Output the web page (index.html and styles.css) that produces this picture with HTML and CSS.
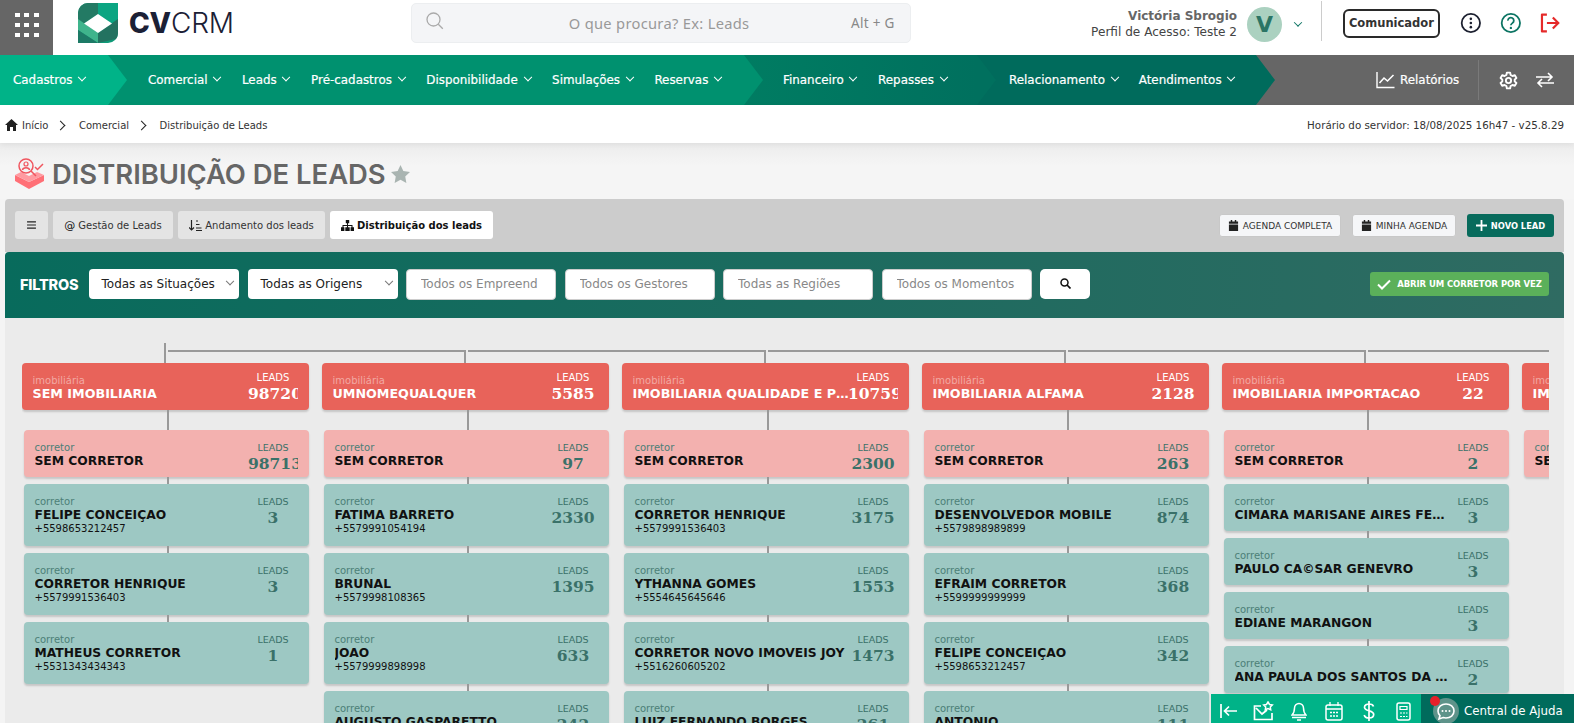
FILE: index.html
```html
<!DOCTYPE html>
<html lang="pt-BR">
<head>
<meta charset="utf-8">
<title>Distribuição de Leads</title>
<link rel="stylesheet" href="styles.css">
</head>
<body>
<svg class="defs" width="0" height="0">
  <symbol id="cal" viewBox="0 0 12 12"><path fill="#222" d="M3 0h1.600v1.600h2.800V0H9v1.600h2V4H1V1.600h2zM1 5h10v7H1z"/></symbol>
</svg>
<header class="top">
  <div class="apps"><span></span><span></span><span></span><span></span><span></span><span></span><span></span><span></span><span></span></div>
  <div class="logo">
    <svg width="40" height="40" viewBox="0 0 40 40">
      <path fill="#0f9a78" d="M10 0h30v30a10 10 0 0 1-10 10H0V10A10 10 0 0 1 10 0z"/>
      <path fill="#237a64" d="M0 10A10 10 0 0 1 10 0h10v11L6 20.500l-6 4z"/>
      <path fill="#0ba582" d="M20 0h20v16l-6 4.500-14-9.500z"/>
      <path fill="#237260" d="M40 16v14a10 10 0 0 1-2 6l-18 4v-10z"/>
      <path fill="#3fb48c" d="M0 16l20 14v10L0 27z"/>
      <path fill="#1d7a66" d="M0 27l20 13H0z"/>
      <path fill="#fff" d="M20 11l14 9.500L20 30 6 20.500z"/>
    </svg>
    <span class="brand"><b>CV</b>CRM</span>
  </div>
  <div class="search">
    <svg class="search-ico" width="18" height="18" viewBox="0 0 18 18"><circle cx="7.500" cy="7.500" r="6.500" fill="none" stroke="#aaa" stroke-width="1.300"/><path d="M12.300 12.300l4.500 4.500" stroke="#aaa" stroke-width="1.300"/></svg>
    <span class="search-text">O que procura? Ex: Leads</span>
    <span class="search-key">Alt + G</span>
  </div>
  <div class="user">
    <div class="user-text"><strong>Victória Sbrogio</strong><span>Perfil de Acesso: Teste 2</span></div>
    <div class="avatar">V</div>
    <i class="chev chev-teal"></i>
  </div>
  <div class="top-actions">
    <button class="com">Comunicador</button>
    <svg width="22" height="22" viewBox="0 0 22 22"><circle cx="11" cy="11" r="9.300" fill="none" stroke="#1c2030" stroke-width="1.800"/><circle cx="11" cy="6.800" r="1.300" fill="#1c2030"/><circle cx="11" cy="11" r="1.300" fill="#1c2030"/><circle cx="11" cy="15.200" r="1.300" fill="#1c2030"/></svg>
    <svg width="22" height="22" viewBox="0 0 22 22"><circle cx="11" cy="11" r="9.300" fill="none" stroke="#0c7463" stroke-width="1.800"/><path d="M8 8.600a3 3 0 1 1 4.600 2.500c-1 .7-1.600 1.100-1.600 2.200" fill="none" stroke="#0c7463" stroke-width="1.800"/><circle cx="11" cy="16" r="1.200" fill="#0c7463"/></svg>
    <svg width="22" height="22" viewBox="0 0 22 22"><path d="M8 2.500H3v17h5" fill="none" stroke="#e52a2a" stroke-width="2.200" stroke-linejoin="round"/><path d="M8 11h11M14 5.500l5.500 5.500-5.500 5.500" fill="none" stroke="#e52a2a" stroke-width="2.200"/></svg>
  </div>
</header>

<nav class="nav">
  <div class="seg seg1"><a>Cadastros <i class="chev"></i></a></div>
  <div class="seg seg2"><a>Comercial <i class="chev"></i></a><a>Leads <i class="chev"></i></a><a>Pré-cadastros <i class="chev"></i></a><a>Disponibilidade <i class="chev"></i></a><a>Simulações <i class="chev"></i></a><a>Reservas <i class="chev"></i></a></div>
  <div class="seg seg3"><a>Financeiro <i class="chev"></i></a><a>Repasses <i class="chev"></i></a></div>
  <div class="seg seg4"><a>Relacionamento <i class="chev"></i></a><a>Atendimentos <i class="chev"></i></a></div>
  <div class="nav-right">
    <a class="rel">
      <svg width="19" height="18" viewBox="0 0 19 18"><path d="M1 1v15.500h17.500" fill="none" stroke="#fff" stroke-width="1.400"/><path d="M3.500 12l4.500-5 3.500 3 6-6" fill="none" stroke="#fff" stroke-width="1.600"/></svg>
      Relatórios
    </a>
    <svg class="gear" width="19" height="19" viewBox="0 0 24 24"><path fill="none" stroke="#fff" stroke-width="2.400" stroke-linejoin="round" d="M10 2h4l.7 3 2.300 1.300 3-.9 2 3.400-2.200 2.100v2.200l2.200 2.100-2 3.400-3-.9L14.700 19l-.7 3h-4l-.7-3L7 17.700l-3 .9-2-3.400 2.200-2.100v-2.200L2 8.800l2-3.400 3 .9L9.300 5z"/><circle cx="12" cy="12" r="3.300" fill="none" stroke="#fff" stroke-width="2.400"/></svg>
    <svg class="swap" width="18" height="16" viewBox="0 0 18 16"><path d="M0 5h16M12 1l4 4-4 4M18 11H2M6 7l-4 4 4 4" fill="none" stroke="#fff" stroke-width="1.600"/></svg>
  </div>
</nav>

<div class="crumbs">
  <div class="crumb-list">
    <svg width="13" height="12" viewBox="0 0 13 12"><path fill="#222" d="M6.500 0L13 6h-2v6H8V8H5v4H2V6H0z"/></svg>
    <span class="crumb-first">Início</span><i class="sep"></i><span>Comercial</span><i class="sep"></i><span>Distribuição de Leads</span>
  </div>
  <div class="server">Horário do servidor: 18/08/2025 16h47 - v25.8.29</div>
</div>

<div class="title-row">
  <svg width="31" height="31" viewBox="0 0 31 31">
    <path fill="#ff6f76" d="M1 17l14 7 15-7v6l-15 8-14-8z"/>
    <path fill="#ff9aa0" d="M1 17l6-3 8 4 8-4 7 3-15 7z"/>
    <circle cx="12" cy="8" r="7" fill="#f4f4f4" stroke="#f0565f" stroke-width="1.500"/>
    <circle cx="12" cy="6" r="2" fill="none" stroke="#f0565f" stroke-width="1.200"/>
    <path d="M8.500 12c.5-3 6.500-3 7 0M17 13l5 5M21 9l2.500 2.500L29 6" fill="none" stroke="#f0565f" stroke-width="1.500"/>
  </svg>
  <h1>DISTRIBUIÇÃO DE LEADS</h1>
  <svg class="star" width="19" height="18" viewBox="0 0 20 19"><path fill="#a9b4b1" d="M10 0l3 6.300 7 1-5 4.800 1.200 6.900L10 15.700 3.800 19 5 12.100 0 7.300l7-1z"/></svg>
</div>

<main class="panel">
  <div class="toolbar">
    <div class="tabs">
      <button class="tab tab-icon"><svg width="9" height="8" viewBox="0 0 10 9"><path d="M0 1h10M0 4.500h10M0 8h10" stroke="#222" stroke-width="1.300"/></svg></button>
      <button class="tab tab-a"><b class="at">@</b> Gestão de Leads</button>
      <button class="tab tab-b"><svg width="13" height="11" viewBox="0 0 13 11"><path d="M2.500 0v10M0 7.500L2.500 10 5 7.500M7 1h2M7 4.500h3.500M7 8h5.500M7 10.500h6" stroke="#222" stroke-width="1.200" fill="none"/></svg> Andamento dos leads</button>
      <button class="tab tab-c"><svg width="13" height="11" viewBox="0 0 13 11"><path fill="#111" d="M4.800 0h3.400v3.200H7V5h4.500v2.200H13V11H9.600V7.200h.9V6H7v1.200h1.700V11H4.300V7.200H6V6H2.500v1.200h.9V11H0V7.200h1.500V5H6V3.200H4.800z"/></svg> Distribuição dos leads</button>
    </div>
    <div class="tools">
      <button class="tool tool-a"><svg width="11" height="11"><use href="#cal"/></svg>AGENDA COMPLETA</button>
      <button class="tool tool-b"><svg width="11" height="11"><use href="#cal"/></svg>MINHA AGENDA</button>
      <button class="tool-new"><svg width="11" height="11" viewBox="0 0 11 11"><path d="M5.500 0v11M0 5.500h11" stroke="#fff" stroke-width="1.800"/></svg>NOVO LEAD</button>
    </div>
  </div>

  <section class="filters">
    <strong class="f-label">FILTROS</strong>
    <div class="select">Todas as Situações<i class="chev chev-gray"></i></div>
    <div class="select select-last">Todas as Origens<i class="chev chev-gray"></i></div>
    <input class="f-input" placeholder="Todos os Empreend">
    <input class="f-input" placeholder="Todos os Gestores">
    <input class="f-input" placeholder="Todas as Regiões">
    <input class="f-input" placeholder="Todos os Momentos">
    <button class="f-search"><svg width="11" height="11" viewBox="0 0 11 11"><circle cx="4.500" cy="4.500" r="3.500" fill="none" stroke="#111" stroke-width="1.500"/><path d="M7 7l3.500 3.500" stroke="#111" stroke-width="1.700"/></svg></button>
    <button class="f-open"><svg width="14" height="11" viewBox="0 0 14 11"><path d="M1 5.500l4 4 8-8" fill="none" stroke="#fff" stroke-width="2"/></svg>ABRIR UM CORRETOR POR VEZ</button>
  </section>

  <div class="tree-wrap">
    <div class="tree">

      <div class="col col-first">
        <div class="imob"><div class="info"><small>imobiliária</small><b>SEM IMOBILIARIA</b></div><div class="count"><small>LEADS</small><b>98720</b></div></div>
        <div class="stack">
          <div class="card pink"><div class="info"><small>corretor</small><b>SEM CORRETOR</b></div><div class="count"><small>LEADS</small><b>98713</b></div></div>
          <div class="card teal"><div class="info"><small>corretor</small><b>FELIPE CONCEIÇAO</b><span>+5598653212457</span></div><div class="count"><small>LEADS</small><b>3</b></div></div>
          <div class="card teal"><div class="info"><small>corretor</small><b>CORRETOR HENRIQUE</b><span>+5579991536403</span></div><div class="count"><small>LEADS</small><b>3</b></div></div>
          <div class="card teal"><div class="info"><small>corretor</small><b>MATHEUS CORRETOR</b><span>+5531343434343</span></div><div class="count"><small>LEADS</small><b>1</b></div></div>
        </div>
      </div>

      <div class="col">
        <div class="imob"><div class="info"><small>imobiliária</small><b>UMNOMEQUALQUER</b></div><div class="count"><small>LEADS</small><b>5585</b></div></div>
        <div class="stack">
          <div class="card pink"><div class="info"><small>corretor</small><b>SEM CORRETOR</b></div><div class="count"><small>LEADS</small><b>97</b></div></div>
          <div class="card teal"><div class="info"><small>corretor</small><b>FATIMA BARRETO</b><span>+5579991054194</span></div><div class="count"><small>LEADS</small><b>2330</b></div></div>
          <div class="card teal"><div class="info"><small>corretor</small><b>BRUNAL</b><span>+5579998108365</span></div><div class="count"><small>LEADS</small><b>1395</b></div></div>
          <div class="card teal"><div class="info"><small>corretor</small><b>JOAO</b><span>+5579999898998</span></div><div class="count"><small>LEADS</small><b>633</b></div></div>
          <div class="card teal"><div class="info"><small>corretor</small><b>AUGUSTO GASPARETTO</b><span>+5579999999999</span></div><div class="count"><small>LEADS</small><b>242</b></div></div>
        </div>
      </div>

      <div class="col">
        <div class="imob"><div class="info"><small>imobiliária</small><b>IMOBILIARIA QUALIDADE E PRODUTIVIDADE</b></div><div class="count"><small>LEADS</small><b>10759</b></div></div>
        <div class="stack">
          <div class="card pink"><div class="info"><small>corretor</small><b>SEM CORRETOR</b></div><div class="count"><small>LEADS</small><b>2300</b></div></div>
          <div class="card teal"><div class="info"><small>corretor</small><b>CORRETOR HENRIQUE</b><span>+5579991536403</span></div><div class="count"><small>LEADS</small><b>3175</b></div></div>
          <div class="card teal"><div class="info"><small>corretor</small><b>YTHANNA GOMES</b><span>+5554645645646</span></div><div class="count"><small>LEADS</small><b>1553</b></div></div>
          <div class="card teal"><div class="info"><small>corretor</small><b>CORRETOR NOVO IMOVEIS JOY</b><span>+5516260605202</span></div><div class="count"><small>LEADS</small><b>1473</b></div></div>
          <div class="card teal"><div class="info"><small>corretor</small><b>LUIZ FERNANDO BORGES</b><span>+5579999999999</span></div><div class="count"><small>LEADS</small><b>261</b></div></div>
        </div>
      </div>

      <div class="col">
        <div class="imob"><div class="info"><small>imobiliária</small><b>IMOBILIARIA ALFAMA</b></div><div class="count"><small>LEADS</small><b>2128</b></div></div>
        <div class="stack">
          <div class="card pink"><div class="info"><small>corretor</small><b>SEM CORRETOR</b></div><div class="count"><small>LEADS</small><b>263</b></div></div>
          <div class="card teal"><div class="info"><small>corretor</small><b>DESENVOLVEDOR MOBILE</b><span>+5579898989899</span></div><div class="count"><small>LEADS</small><b>874</b></div></div>
          <div class="card teal"><div class="info"><small>corretor</small><b>EFRAIM CORRETOR</b><span>+5599999999999</span></div><div class="count"><small>LEADS</small><b>368</b></div></div>
          <div class="card teal"><div class="info"><small>corretor</small><b>FELIPE CONCEIÇAO</b><span>+5598653212457</span></div><div class="count"><small>LEADS</small><b>342</b></div></div>
          <div class="card teal"><div class="info"><small>corretor</small><b>ANTONIO</b><span>+5579999999999</span></div><div class="count"><small>LEADS</small><b>111</b></div></div>
        </div>
      </div>

      <div class="col">
        <div class="imob"><div class="info"><small>imobiliária</small><b>IMOBILIARIA IMPORTACAO</b></div><div class="count"><small>LEADS</small><b>22</b></div></div>
        <div class="stack">
          <div class="card pink"><div class="info"><small>corretor</small><b>SEM CORRETOR</b></div><div class="count"><small>LEADS</small><b>2</b></div></div>
          <div class="card teal short"><div class="info"><small>corretor</small><b>CIMARA MARISANE AIRES FERREIRA</b></div><div class="count"><small>LEADS</small><b>3</b></div></div>
          <div class="card teal short"><div class="info"><small>corretor</small><b>PAULO CA©SAR GENEVRO</b></div><div class="count"><small>LEADS</small><b>3</b></div></div>
          <div class="card teal short"><div class="info"><small>corretor</small><b>EDIANE MARANGON</b></div><div class="count"><small>LEADS</small><b>3</b></div></div>
          <div class="card teal short"><div class="info"><small>corretor</small><b>ANA PAULA DOS SANTOS DA SILVA</b></div><div class="count"><small>LEADS</small><b>2</b></div></div>
        </div>
      </div>

      <div class="col">
        <div class="imob"><div class="info"><small>imobiliária</small><b>IMOBILIARIA</b></div><div class="count"><small>LEADS</small><b>10</b></div></div>
        <div class="stack">
          <div class="card pink"><div class="info"><small>corretor</small><b>SEM CORRETOR</b></div><div class="count"><small>LEADS</small><b>10</b></div></div>
        </div>
      </div>

    </div>
  </div>
</main>

<div class="dock">
  <div class="dock-icons">
    <svg width="20" height="18" viewBox="0 0 20 18"><path d="M2 2v14M18 9H6M10 4.500L5.500 9l4.500 4.500" fill="none" stroke="#fff" stroke-width="1.700"/></svg>
    <svg width="21" height="20" viewBox="0 0 21 20"><path d="M8 5H1.500v13.500H19V12M3 7l6 6 5-4" fill="none" stroke="#fff" stroke-width="1.700"/><path d="M15 1l1.500 2.500 2.800.5-2 2 .4 2.800-2.700-1.300-2.700 1.300.4-2.800-2-2 2.800-.5z" fill="none" stroke="#fff" stroke-width="1.500"/></svg>
    <svg width="16" height="19" viewBox="0 0 16 19"><path d="M8 1.500a4.500 4.500 0 0 0-4.500 4.500c0 4-1 5.500-2.500 7h14c-1.500-1.500-2.500-3-2.500-7A4.500 4.500 0 0 0 8 1.500zM1 15.500h14M6 18h4" fill="none" stroke="#fff" stroke-width="1.500"/></svg>
    <svg width="18" height="19" viewBox="0 0 18 19"><rect x="1" y="3" width="16" height="15" rx="2" fill="none" stroke="#fff" stroke-width="1.500"/><path d="M1 7h16M5 0v4M13 0v4M5 10.500h2M8 10.500h2M11 10.500h2M5 14h2M8 14h2M11 14h2" stroke="#fff" stroke-width="1.300"/></svg>
    <svg width="12" height="20" viewBox="0 0 12 20"><path d="M10.500 5.500C10 3.500 8 3 6 3S1.500 4 1.500 6.200 4 9.200 6 9.800s4.700 1.300 4.700 3.800-2.500 3.400-4.700 3.400-4.300-.8-4.800-3M6 0v20" fill="none" stroke="#fff" stroke-width="1.700"/></svg>
    <svg width="15" height="19" viewBox="0 0 15 19"><rect x="1" y="1" width="13" height="17" rx="2" fill="none" stroke="#fff" stroke-width="1.500"/><path d="M4 4.500h7v3H4zM4 11h2M7 11h2M10 11h1.500M4 14.500h2M7 14.500h2M10 14.500h1.500" fill="none" stroke="#fff" stroke-width="1.200"/></svg>
  </div>
  <div class="help">
    <span class="help-ico"><svg width="18" height="17" viewBox="0 0 18 17"><path d="M9 1c4.400 0 8 2.800 8 7s-3.600 7-8 7c-1 0-2-.1-2.900-.4L2 16l1-3.400C1.700 11.400 1 9.800 1 8c0-4.200 3.600-7 8-7z" fill="none" stroke="#fff" stroke-width="1.600"/><circle cx="5.500" cy="8" r="1" fill="#fff"/><circle cx="9" cy="8" r="1" fill="#fff"/><circle cx="12.500" cy="8" r="1" fill="#fff"/></svg></span>
    <span class="help-dot"></span>
    <span>Central de Ajuda</span>
  </div>
</div>
</body>
</html>
```

FILE: styles.css
```css
* { box-sizing: border-box; }
html, body { margin: 0; height: 723px; overflow: hidden; }
body { position: relative; background: #f4f4f4; font-family: "DejaVu Sans", sans-serif; color: #222; }
button { font-family: inherit; cursor: pointer; }
.defs { position: absolute; }

.top { height: 55px; background: #fff; display: flex; align-items: flex-start; }
.apps { width: 53px; height: 55px; background: #666; padding: 13px 12px; display: grid; grid-template-columns: repeat(3, 5px); grid-auto-rows: 4px; gap: 6px 4.500px; justify-content: center; align-content: start; }
.apps span { background: #fff; }
.logo { margin-left: 25px; padding-top: 3px; display: flex; gap: 11px; }
.brand { font-family: Inter, sans-serif; font-weight: 300; font-size: 28px; line-height: 40px; color: #1b2035; letter-spacing: -0.200px; }
.brand b { font-weight: 800; }
.search { width: 500px; height: 40px; margin: 3px 0 0 177px; background: #f4f5f7; border: 1px solid #eceef0; border-radius: 5px; display: flex; align-items: center; position: relative; padding: 0 14px; font-size: 13px; color: #999; }
.search-ico { margin-top: -4px; }
.search-text { margin-left: 125px; font-size: 14.700px; font-family: "Noto Sans", sans-serif; letter-spacing: .3px; }
.search-key { margin-left: auto; margin-right: 1px; font-size: 13.500px; color: #888; font-family: "Noto Sans", sans-serif; letter-spacing: .3px; }
.user { margin-left: auto; display: flex; align-items: center; height: 48px; width: 237px; justify-content: flex-end; }
.user-text { display: flex; flex-direction: column; align-items: flex-end; font-size: 12.100px; line-height: 16px; white-space: nowrap; }
.user-text strong { color: #666; font-size: 12px; }
.user-text span { color: #444; }
.avatar { width: 35px; height: 35px; margin-left: 10px; border-radius: 50%; background: #abd1c0; color: #2b7565; font: 700 22px/35px "DejaVu Sans", sans-serif; text-align: center; }
.chev { display: inline-block; width: 6px; height: 6px; border-right: 1.500px solid #fff; border-bottom: 1.500px solid #fff; transform: rotate(45deg) translate(-2px, -2px); margin-left: 3px; vertical-align: middle; }
.chev-teal { border-color: #0c7463; margin-left: 13px; transform: rotate(45deg) translate(-1px, -1px); }
.chev-gray { border-color: #777; margin-left: auto; width: 6px; height: 6px; }
.top-actions { width: 240px; height: 40px; margin-top: 1px; margin-right: 13px; margin-left: 20px; border-left: 1px solid #ccc; display: flex; align-items: center; gap: 18px; padding: 4px 0 0 21px; }
.com { width: 98px; height: 29px; padding: 0; background: #fff; border: 2px solid #2a2a2a; border-radius: 6px; font-size: 11.500px; font-weight: 700; color: #333; margin-right: 2px; }

.nav { height: 50px; display: flex; color: #fff; font-size: 11.900px; background: #666; -webkit-text-stroke: .2px #fff; }
.seg { position: relative; display: flex; align-items: center; height: 50px; flex: none; padding-bottom: 1px; }
.seg a { white-space: nowrap; }
.seg::after { content: ""; position: absolute; top: 0; left: 100%; border-style: solid; border-width: 25px 0 25px 19px; border-color: transparent; z-index: 1; }
.seg1 { width: 108px; padding-left: 13px; background: #00b388; }
.seg1::after { border-left-color: #00b388; }
.seg2 { width: 636px; padding-left: 40px; gap: 21.600px; background: #00916f; }
.seg2::after { border-left-color: #00916f; }
.seg3 { width: 233px; padding-left: 39px; gap: 21.600px; background: linear-gradient(90deg, #007c62, #00705e); }
.seg3::after { border-left-color: #00705e; }
.seg4 { width: 279px; padding-left: 32px; gap: 21px; background: #006b5c; }
.seg4::after { border-left-color: #006b5c; }
.nav-right { flex: 1; display: flex; align-items: center; padding-left: 120px; }
.rel { display: flex; align-items: center; gap: 5px; width: 103px; height: 40px; border-right: 1px solid #7a7a7a; }
.gear { margin-left: 20px; }
.swap { margin-left: 18px; }

.crumbs { height: 38px; background: #fff; display: flex; justify-content: space-between; align-items: center; padding: 2px 10px 0 5px; font-size: 10px; color: #333; box-shadow: 0 2px 6px rgba(0,0,0,.06); position: relative; }
.crumb-list { display: flex; align-items: center; }
.crumb-first { margin-left: 4px; }
.sep { width: 7px; height: 7px; margin: 0 14.500px 0 9px; border-top: 1.500px solid #222; border-right: 1.500px solid #222; transform: rotate(45deg); }
.server { font-size: 10.300px; }

.title-row { height: 56px; display: flex; align-items: center; padding: 5px 0 0 14px; gap: 7px; background: linear-gradient(#ececec, #f5f5f5 40%); }
.title-row h1 { margin: 0; font: 600 27.400px Inter, sans-serif; color: #666; }
.star { margin-left: -2px; }

.panel { margin: 0 10px 0 5px; }
.toolbar { height: 53px; background: #ccc; display: flex; justify-content: space-between; padding: 12px 10px 0 10px; border-radius: 4px 4px 0 0; }
.tabs { display: flex; gap: 5px; }
.tab { height: 28px; padding: 0; background: #e4e4e4; border: 0; border-radius: 3px; font-size: 10px; color: #333; display: flex; align-items: center; justify-content: center; gap: 3px; }
.tab-icon { width: 33px; }
.tab-a { width: 120px; }
.tab-b { width: 147px; }
.tab-c { width: 163px; background: #fff; font-weight: 700; color: #111; }
.at { font-weight: 400; font-size: 11px; color: #111; }
.tools { display: flex; gap: 11px; padding-top: 3px; }
.tool { height: 23px; padding: 0; background: #f5f6f8; border: 1px solid #c8c8c8; border-radius: 3px; font-size: 9px; color: #333; display: flex; align-items: center; justify-content: center; gap: 4px; }
.tool-a { width: 122px; }
.tool-b { width: 104px; }
.tool-new { width: 87px; height: 23px; padding: 0; background: #076b5c; border: 0; border-radius: 3px; color: #fff; font-size: 8.300px; font-weight: 700; display: flex; align-items: center; justify-content: center; gap: 4px; }

.filters { height: 66px; background: linear-gradient(90deg, #086b5c, #2f6b62); display: flex; align-items: center; padding: 0 0 2px 15px; border-radius: 4px 4px 0 0; position: relative; }
.f-label { width: 69px; font: 800 14.500px Inter, sans-serif; color: #fff; letter-spacing: -.2px; }
.select { width: 150px; height: 30px; margin-right: 9px; padding: 0 6px 0 12.500px; background: #fff; border-radius: 4px; display: flex; align-items: center; font-size: 12px; color: #222; white-space: nowrap; }
.select-last { margin-right: 8px; }
.f-input { width: 150px; height: 31px; margin: 0 8.500px 0 0; padding: 0 14px; background: #fff; border: 1px solid #ccc; border-radius: 4px; font: 12px "DejaVu Sans", sans-serif; outline: 0; }
.f-input::placeholder { color: #888; opacity: 1; }
.f-search { width: 50px; height: 30px; padding: 0; background: #fff; border: 0; border-radius: 5px; }
.f-open { margin-left: auto; margin-right: 15px; width: 179px; height: 24px; padding: 0; background: #5bb05a; border: 0; border-radius: 3px; color: #fff; font-size: 8.500px; font-weight: 700; display: flex; align-items: center; justify-content: center; gap: 6px; letter-spacing: -.1px; white-space: nowrap; }

.tree-wrap { height: 405px; background: #ebebeb; padding: 25px 15px 0 17px; overflow: hidden; }
.tree { display: flex; gap: 13px; overflow: hidden; height: 380px; }
.col { flex: 0 0 287px; width: 287px; min-width: 0; position: relative; padding-top: 20px; }
.col::before { content: ""; position: absolute; left: 142px; top: 7px; width: 2px; height: 13px; background: #999; }
.col-first::before { top: 0; height: 20px; }
.col::after { content: ""; position: absolute; left: 146px; top: 7px; width: 297px; height: 2px; background: #999; }
.imob, .card { display: flex; border-radius: 4px; box-shadow: 0 2px 2px rgba(0,0,0,.16); }
.imob { height: 47px; background: #e8635a; color: #fff; padding: 8px 11px 0 10.500px; }
.stack { padding: 20px 0 0 2px; }
.card { position: relative; height: 62px; margin-bottom: 7px; padding: 11px 11px 0 10.500px; }
.card::before { content: ""; position: absolute; left: 142.500px; top: -7px; width: 2px; height: 7px; background: #999; }
.card:first-child::before { top: -20px; height: 20px; }
.pink, .short { height: 47px; }
.pink { background: #f3b1af; }
.teal { background: #9dc8c3; }
.info { flex: 1; min-width: 0; display: flex; flex-direction: column; }
.info small { font-size: 10px; line-height: 10px; margin-top: 2px; color: #4c7f77; }
.imob .info small { color: #f2a9a3; margin-top: 5px; }
.info b { font-size: 12.300px; line-height: 15px; margin-top: 1px; color: #111; white-space: nowrap; overflow: hidden; text-overflow: ellipsis; }
.imob .info b { color: #fff; font-size: 12.700px; margin-top: 0; }
.info span { font-size: 10px; line-height: 13px; margin-top: -1px; color: #111; }
.count { flex: 0 0 50px; overflow: hidden; padding-top: 1px; text-align: center; color: #3a7169; }
.count small { display: block; font-size: 9.500px; line-height: 11px; margin-bottom: 1px; }
.imob .count { color: #fff; margin-left: -3px; }
.imob .count small { font-size: 10px; }
.count b { display: block; font: 700 15.500px/20px "DejaVu Serif", serif; white-space: nowrap; }

.dock { position: absolute; left: 1211px; right: 0; bottom: 0; height: 29px; display: flex; color: #fff; z-index: 5; }
.dock-icons { width: 210px; background: #00b388; display: grid; grid-template-columns: repeat(6, 35px); align-items: center; justify-items: center; padding-top: 5px; }
.help { flex: 1; background: #006b5c; position: relative; display: flex; align-items: center; gap: 5px; padding: 5px 0 0 12px; font-size: 11.800px; white-space: nowrap; }
.help-ico { width: 26px; height: 26px; border-radius: 50%; background: #5e938a; display: flex; align-items: center; justify-content: center; }
.help-dot { position: absolute; left: 9px; top: 2px; width: 10px; height: 10px; border-radius: 50%; background: #e5202a; }
```
